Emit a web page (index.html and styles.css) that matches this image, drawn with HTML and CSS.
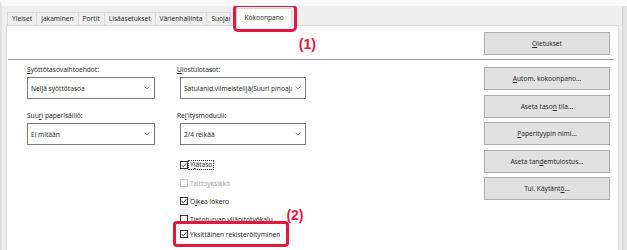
FILE: index.html
```html
<!DOCTYPE html>
<html lang="fi">
<head>
    <meta charset="UTF-8">
    <meta name="viewport" content="width=device-width, initial-scale=1.0">
    <title>Kokoonpano</title>
    <link rel="stylesheet" href="styles.css">
</head>
<body>
<div class="window">
    <div class="main">
        <div class="tabs">
            <span class="tab">Yleiset</span>
            <span class="tab">Jakaminen</span>
            <span class="tab">Portit</span>
            <span class="tab">Lisäasetukset</span>
            <span class="tab">Värienhallinta</span>
            <span class="tab tab-cut">Suojaus</span>
            <span class="tab tab-active">Kokoonpano<span class="marker marker-1">(1)</span></span>
        </div>

        <div class="panel">
            <div class="top-row">
                <button class="btn"><u>O</u>letukset</button>
            </div>
            <div class="separator"></div>

            <div class="content">
                <div class="options">
                    <div class="fields">
                        <div class="field">
                            <label><u>S</u>yöttötasovaihtoehdot:</label>
                            <div class="select">
                                <span class="select-text">Neljä syöttötasoa</span>
                                <svg class="chevron" width="6" height="4" viewBox="0 0 6 4"><polyline points="0.5,0.5 3,3 5.5,0.5" fill="none" stroke="#8a8a8a" stroke-width="0.9"/></svg>
                            </div>
                        </div>
                        <div class="field field-right">
                            <label><u>U</u>lostulotasot:</label>
                            <div class="select">
                                <span class="select-text">Satulanid.viimeistelijä(Suuri pinoaja</span>
                                <svg class="chevron" width="6" height="4" viewBox="0 0 6 4"><polyline points="0.5,0.5 3,3 5.5,0.5" fill="none" stroke="#8a8a8a" stroke-width="0.9"/></svg>
                            </div>
                        </div>
                        <div class="field">
                            <label>Suu<u>r</u>i paperisäiliö:</label>
                            <div class="select">
                                <span class="select-text">Ei mitään</span>
                                <svg class="chevron" width="6" height="4" viewBox="0 0 6 4"><polyline points="0.5,0.5 3,3 5.5,0.5" fill="none" stroke="#8a8a8a" stroke-width="0.9"/></svg>
                            </div>
                        </div>
                        <div class="field field-right">
                            <label>Re<u>i</u>'itysmoduuli:</label>
                            <div class="select">
                                <span class="select-text">2/4 reikää</span>
                                <svg class="chevron" width="6" height="4" viewBox="0 0 6 4"><polyline points="0.5,0.5 3,3 5.5,0.5" fill="none" stroke="#8a8a8a" stroke-width="0.9"/></svg>
                            </div>
                        </div>
                    </div>

                    <div class="checks">
                        <div class="check">
                            <span class="box"><svg width="6" height="6" viewBox="0 0 6 6"><polyline points="0.6,3 2.3,4.7 5.4,1.2" fill="none" stroke="#222" stroke-width="0.9"/></svg></span>
                            <span class="focus">Y<u>l</u>ätaso</span>
                        </div>
                        <div class="check check-disabled">
                            <span class="box"></span>
                            <span>Taittoyksikkö</span>
                        </div>
                        <div class="check">
                            <span class="box"><svg width="6" height="6" viewBox="0 0 6 6"><polyline points="0.6,3 2.3,4.7 5.4,1.2" fill="none" stroke="#222" stroke-width="0.9"/></svg></span>
                            <span>O<u>i</u>kea lokero</span>
                        </div>
                        <div class="check">
                            <span class="box"></span>
                            <span>Tietoturvan ylläpitotyökalu</span>
                        </div>
                        <div class="check callout">
                            <span class="box"><svg width="6" height="6" viewBox="0 0 6 6"><polyline points="0.6,3 2.3,4.7 5.4,1.2" fill="none" stroke="#222" stroke-width="0.9"/></svg></span>
                            <span>Yksittäinen rekisteröityminen</span>
                            <span class="marker marker-2">(2)</span>
                        </div>
                    </div>
                </div>

                <div class="side-buttons">
                    <button class="btn"><u>A</u>utom. kokoonpano...</button>
                    <button class="btn">Aseta taso<u>n</u> tila...</button>
                    <button class="btn"><u>P</u>aperityypin nimi...</button>
                    <button class="btn">Aseta tan<u>d</u>emtulostus...</button>
                    <button class="btn">Tul. Käytänt<u>ö</u>...</button>
                </div>
            </div>
        </div>
    </div>
    <div class="scroll-edge"></div>
</div>
</body>
</html>
```

FILE: styles.css
```css
body {
    margin: 0;
    background-color: #f0f0f0;
    font-family: "Noto Sans", "Liberation Sans", sans-serif;
    font-size: 6.6px;
    color: #2a2a2a;
    overflow: hidden;
}

.window {
    display: flex;
    width: 627px;
    height: 250px;
    box-sizing: border-box;
    border-top: 6px solid #fafafa;
    border-left: 2px solid #e2e2e2;
    overflow: hidden;
}

.main {
    width: 618px;
    padding-left: 4px;
    box-sizing: border-box;
}

.scroll-edge {
    width: 4px;
    margin-left: 3px;
    background-color: #e4e4e4;
    border-left: 1px solid #d2d2d2;
}

/* tab strip */
.tabs {
    display: flex;
    align-items: flex-end;
    height: 19px;
    padding-left: 1px;
}

.tab {
    height: 13px;
    box-sizing: border-box;
    border: 1px solid #d9d9d9;
    border-bottom: none;
    margin-right: -1px;
    padding: 0 4px;
    line-height: 12px;
    background-color: #f0f0f0;
    white-space: nowrap;
}

.tab-cut {
    width: 25px;
    overflow: hidden;
}

.tab-active {
    position: relative;
    height: 18px;
    margin-left: 6px;
    margin-bottom: -1px;
    padding: 0 7px;
    line-height: 17px;
    background-color: #fff;
}

.tab-active::after {
    content: "";
    position: absolute;
    left: -4px;
    top: -5px;
    right: -6px;
    bottom: -6px;
    border: 3px solid #e5173e;
    border-radius: 5px;
}

.marker {
    position: absolute;
    font-family: "Liberation Sans", Arial, sans-serif;
    font-weight: bold;
    font-size: 14px;
    line-height: 14px;
    color: #e5173e;
}

.marker-1 {
    left: calc(100% + 8px);
    top: 28px;
}

.marker-2 {
    left: 100%;
    top: -16px;
}

/* panel */
.panel {
    height: 240px;
    background-color: #fff;
    border: 1px solid #d9d9d9;
}

.top-row {
    display: flex;
    justify-content: flex-end;
    padding: 6px 8px 0 0;
}

.btn {
    display: block;
    width: 126px;
    height: 23px;
    padding: 0;
    background-color: #e1e1e1;
    border: 1px solid #adadad;
    font-family: inherit;
    font-size: 6.6px;
    color: #2a2a2a;
}

.separator {
    height: 1px;
    background-color: #a0a0a0;
    margin: 4px 4px 0 1px;
}

.content {
    display: flex;
    justify-content: space-between;
    padding: 0 8px 0 20px;
}

.side-buttons {
    display: flex;
    flex-direction: column;
    gap: 4.5px;
    padding-top: 7px;
}

/* dropdown fields */
.fields {
    display: grid;
    grid-template-columns: 128px 129px;
    column-gap: 22px;
    row-gap: 12px;
    padding-top: 5px;
}

.field label {
    display: block;
    line-height: 10px;
    margin-bottom: 2px;
}

.select {
    display: flex;
    align-items: center;
    height: 22px;
    box-sizing: border-box;
    border: 1px solid #7a7a7a;
    padding: 0 4px 0 3px;
    background-color: #fff;
}

.field-right .select {
    margin-left: 3px;
}

.select-text {
    flex: 1;
    overflow: hidden;
    white-space: nowrap;
}

.chevron {
    margin-left: 3px;
    flex-shrink: 0;
}

/* check boxes */
.checks {
    display: flex;
    flex-direction: column;
    align-items: flex-start;
    margin: 11px 0 0 153px;
}

.check {
    display: flex;
    align-items: center;
    gap: 2px;
    height: 18px;
    white-space: nowrap;
}

.box {
    display: flex;
    align-items: center;
    justify-content: center;
    width: 8px;
    height: 8px;
    box-sizing: border-box;
    border: 1px solid #333;
    background-color: #fff;
}

.focus {
    border: 1px dotted #333;
    margin-left: -2px;
    padding: 0 1px;
    line-height: 8px;
}

.check-disabled {
    color: #a3a3a3;
}

.check-disabled .box {
    border-color: #c6c6c6;
}

.callout {
    position: relative;
    height: 26px;
    box-sizing: border-box;
    margin: -7px 0 0 -7px;
    padding: 0 6px 0 4px;
    border: 3px solid #e5173e;
    border-radius: 4px;
    background-color: #fff;
}
```
